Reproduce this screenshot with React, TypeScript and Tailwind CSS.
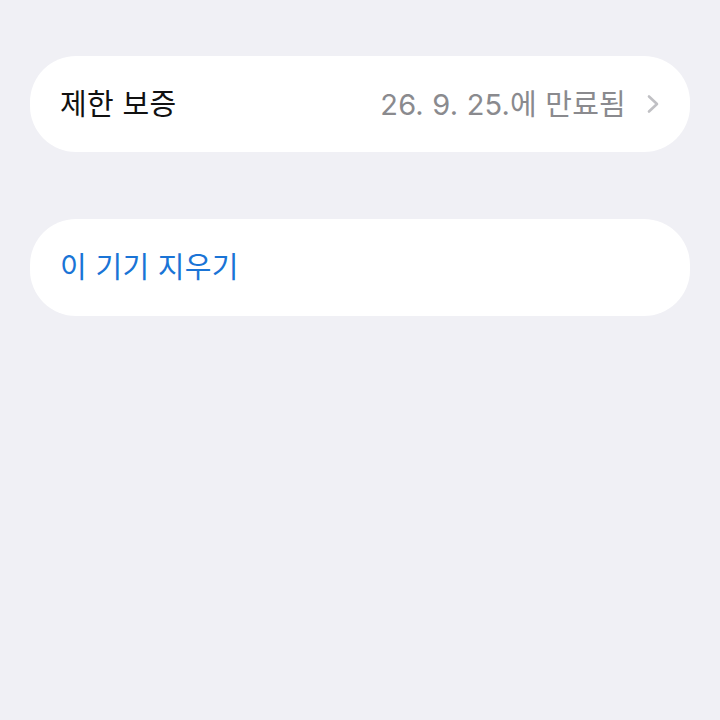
import React from "react";

export default function App() {
  const font = { fontFamily: 'Inter, "Noto Sans CJK KR", sans-serif' };
  return (
    <div className="w-[720px] h-[720px] bg-[#f0f0f5] pt-[56px] px-[30px]" style={font}>
      <div className="h-[96px] bg-white rounded-[46px] flex items-center pl-[30px] pr-[30px]">
        <span className="text-[29px] text-[#111111] leading-none tracking-[0.3px]">제한 보증</span>
        <span className="ml-auto text-[29px] text-[#8a8a8e] leading-none tracking-[0.2px]">26. 9. 25.에 만료됨</span>
        <svg className="ml-[20px]" width="14" height="20" viewBox="0 0 14 20" fill="none">
          <path d="M3 2.5L11 10L3 17.5" stroke="#c0c0c4" strokeWidth="2.6" strokeLinecap="round" strokeLinejoin="round" />
        </svg>
      </div>
      <div className="mt-[67px] h-[97px] bg-white rounded-[46px] flex items-center pl-[30px]">
        <span className="text-[29px] text-[#1a74d6] leading-none tracking-[0.3px]">이 기기 지우기</span>
      </div>
    </div>
  );
}
